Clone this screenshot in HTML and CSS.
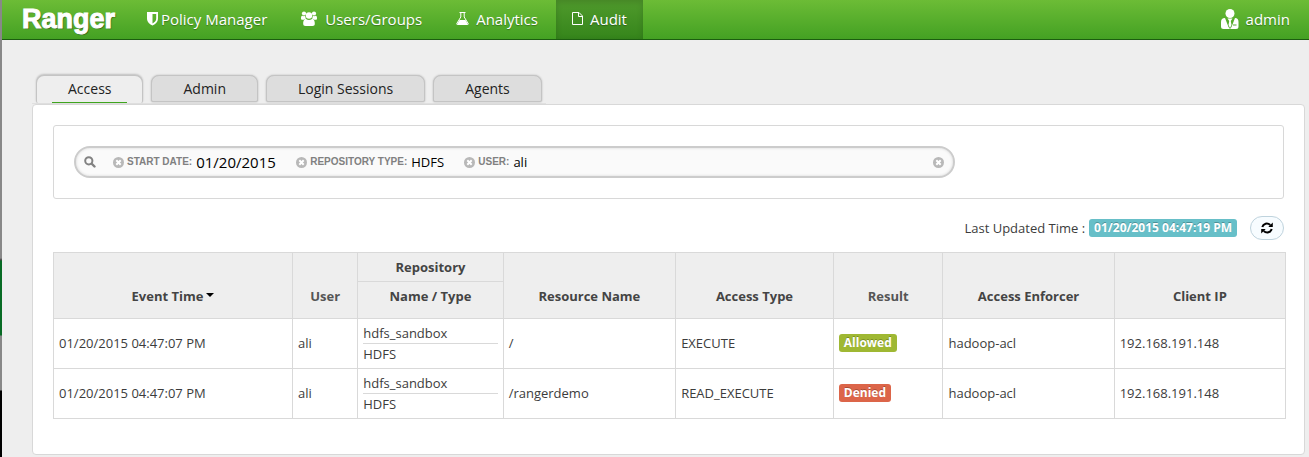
FILE: index.html
```html
<!DOCTYPE html>
<html lang="en">
<head>
<meta charset="utf-8">
<title>Ranger - Audit</title>
<link rel="stylesheet" href="styles.css">
</head>
<body>
<header class="topbar">
  <a class="brand" href="#">Ranger</a>
  <nav class="nav">
    <a class="nav-item tight" href="#">
      <svg width="11" height="14" viewBox="0 0 11 14"><path fill="#fff" fill-rule="evenodd" d="M0 0H11V6.500C11 10 8 12.400 5.500 13.500C3 12.400 0 10 0 6.500ZM5.500 2V11.500C7.500 10.400 9.200 9 9.200 6.500V2Z"/></svg>
      <span>Policy Manager</span>
    </a>
    <a class="nav-item wide" href="#">
      <svg width="16" height="15" viewBox="0 0 16 15"><g fill="#fff"><circle cx="3" cy="2.500" r="2.100"/><circle cx="13" cy="2.500" r="2.100"/><circle cx="8" cy="4.500" r="3.200"/><path d="M1.500 4.800C2.500 5.500 3.500 5.200 4.200 4.700C4.200 6 4.700 7 5.200 7.600C4.200 7.700 3.400 8.100 2.900 8.800H1.500C.4 8.800 0 8.200 0 7.200C0 5.800.4 4.600 1.500 4.800ZM14.500 4.800C13.500 5.500 12.500 5.200 11.800 4.700C11.800 6 11.300 7 10.800 7.600C11.800 7.700 12.600 8.100 13.100 8.800H14.500C15.600 8.800 16 8.200 16 7.200C16 5.800 15.600 4.600 14.500 4.800ZM5 8C6.800 9.300 9.200 9.300 11 8C13.200 8 13.800 10.500 13.800 12.700C13.800 14 13 15 11.500 15H4.500C3 15 2.200 14 2.200 12.700C2.200 10.500 2.800 8 5 8Z"/></g></svg>
      <span>Users/Groups</span>
    </a>
    <a class="nav-item" href="#">
      <svg width="13" height="13" viewBox="0 0 13 13"><path fill="none" stroke="#fff" d="M3.500.5H9.500M4.800.5V5L.8 11.500Q.5 12.500 1.500 12.500H11.500Q12.500 12.500 12.200 11.500L8.200 5V.5"/><path fill="#fff" d="M3.500 8H9.500L12 12.500H1Z"/></svg>
      <span>Analytics</span>
    </a>
    <a class="nav-item active" href="#">
      <svg width="11" height="13" viewBox="0 0 11 13"><path fill="none" stroke="#fff" d="M.5.5H7L10.500 4V12.500H.5ZM6.500.5V4.500H10.500"/></svg>
      <span>Audit</span>
    </a>
  </nav>
  <a class="account" href="#">
    <svg width="18" height="20" viewBox="0 0 18 20"><g fill="#fff"><circle cx="9" cy="4.500" r="4.500"/><path fill-rule="evenodd" d="M4 9L7.500 18L9 20H2.500Q0 20 0 17.500V13Q0 9 4 9ZM14 9L10.500 18L9 20H15Q17.500 20 17.500 17.500V13Q17.500 9 14 9ZM12 15.500V16.500H15.500V15.500Z"/><path d="M6.500 9.500H11.500L9.800 12L10.500 16L9 19L7.500 16L8.200 12Z"/></g></svg>
    <span>admin</span>
  </a>
</header>
<main class="page">
  <nav class="tabs">
    <a class="tab current" href="#"><span>Access</span></a>
    <a class="tab" href="#"><span>Admin</span></a>
    <a class="tab" href="#"><span>Login Sessions</span></a>
    <a class="tab" href="#"><span>Agents</span></a>
  </nav>
  <section class="panel">
    <div class="filter">
      <form class="search">
        <svg class="lens" width="12" height="12" viewBox="0 0 12 12"><circle cx="4.800" cy="4.800" r="3.600" fill="none" stroke="#828282" stroke-width="2"/><path stroke="#828282" stroke-width="2.400" stroke-linecap="round" d="M8 8L10.500 10.500"/></svg>
        <div class="facet">
          <button class="clear" type="button" aria-label="Remove start date"><svg width="11" height="11" viewBox="0 0 11 11"><circle cx="5.500" cy="5.500" r="5.500" fill="#b8b8b8"/><path stroke="#fff" stroke-width="2" d="M3.300 3.300L7.700 7.700M7.700 3.300L3.300 7.700"/></svg></button>
          <label for="start">START DATE:</label>
          <input class="value date" id="start" type="text" value="01/20/2015">
        </div>
        <div class="facet">
          <button class="clear" type="button" aria-label="Remove repository type"><svg width="11" height="11" viewBox="0 0 11 11"><circle cx="5.500" cy="5.500" r="5.500" fill="#b8b8b8"/><path stroke="#fff" stroke-width="2" d="M3.300 3.300L7.700 7.700M7.700 3.300L3.300 7.700"/></svg></button>
          <label for="repo">REPOSITORY TYPE:</label>
          <input class="value type" id="repo" type="text" value="HDFS">
        </div>
        <div class="facet">
          <button class="clear" type="button" aria-label="Remove user"><svg width="11" height="11" viewBox="0 0 11 11"><circle cx="5.500" cy="5.500" r="5.500" fill="#b8b8b8"/><path stroke="#fff" stroke-width="2" d="M3.300 3.300L7.700 7.700M7.700 3.300L3.300 7.700"/></svg></button>
          <label for="user">USER:</label>
          <input class="value" id="user" type="text" value="ali">
        </div>
        <button class="clear all" type="button" aria-label="Clear search"><svg width="11" height="11" viewBox="0 0 11 11"><circle cx="5.500" cy="5.500" r="5.500" fill="#b8b8b8"/><path stroke="#fff" stroke-width="2" d="M3.300 3.300L7.700 7.700M7.700 3.300L3.300 7.700"/></svg></button>
      </form>
    </div>
    <div class="status">
      <span>Last Updated Time :</span>
      <span class="label info">01/20/2015 04:47:19 PM</span>
      <button class="refresh" type="button" aria-label="Refresh"><svg width="12" height="12" viewBox="0 0 12 12"><path fill="none" stroke="#000" stroke-width="2" d="M1.300 5C2.200 1.400 6.500.4 9.300 3M10.700 7C9.800 10.600 5.500 11.600 2.700 9"/><path d="M11.800.5V5H7.300ZM.2 11.500V7H4.700Z"/></svg></button>
    </div>
    <table class="grid">
      <colgroup><col class="c-time"><col class="c-user"><col class="c-repo"><col class="c-res"><col class="c-type"><col class="c-result"><col class="c-enf"><col class="c-ip"></colgroup>
      <thead>
        <tr class="group"><th rowspan="2">Event Time<span class="caret"></span></th><th class="soft" rowspan="2">User</th><th class="over">Repository</th><th rowspan="2">Resource Name</th><th rowspan="2">Access Type</th><th class="soft" rowspan="2">Result</th><th rowspan="2">Access Enforcer</th><th rowspan="2">Client IP</th></tr>
        <tr class="names"><th>Name / Type</th></tr>
      </thead>
      <tbody>
        <tr><td>01/20/2015 04:47:07 PM</td><td>ali</td><td class="pair"><div class="repo">hdfs_sandbox</div><div>HDFS</div></td><td>/</td><td>EXECUTE</td><td><span class="label allowed">Allowed</span></td><td>hadoop-acl</td><td>192.168.191.148</td></tr>
        <tr><td>01/20/2015 04:47:07 PM</td><td>ali</td><td class="pair"><div class="repo">hdfs_sandbox</div><div>HDFS</div></td><td>/rangerdemo</td><td>READ_EXECUTE</td><td><span class="label denied">Denied</span></td><td>hadoop-acl</td><td>192.168.191.148</td></tr>
      </tbody>
    </table>
  </section>
</main>
</body>
</html>
```
FILE: styles.css
```css
* { box-sizing: border-box; }

body {
  margin: 0;
  padding-left: 2px;
  min-height: 100vh;
  background: linear-gradient(#888 0 258px, #444 260px, #086b25 261px 335px, #888 336px 390px, #000 391px) 0 0 / 2px 100% no-repeat #eee;
  font: 13px/20px "Open Sans", "Noto Sans", sans-serif;
  color: #3c3c3c;
}

a { color: inherit; text-decoration: none; }
svg { display: block; flex: none; }

.topbar {
  display: flex;
  height: 40px;
  padding: 0 19px 0 20px;
  border-bottom: 1px solid #1c5d10;
  background: linear-gradient(#6cbc36, #44a123);
  color: #fff;
  font-size: 15px;
  text-shadow: 0 1px 1px rgba(0, 0, 0, .3);
}
.brand {
  width: 109px;
  font: bold 27px/39px "Liberation Sans", Arial, sans-serif;
  -webkit-text-stroke: 1px #fff;
  text-shadow: 1px 1px 1px rgba(0, 0, 0, .5);
}
.nav { display: flex; gap: 2px; }
.nav-item, .account { display: flex; align-items: center; gap: 7px; padding-bottom: 2px; }
.nav-item { padding-left: 16px; padding-right: 16px; }
.tight { gap: 3px; }
.wide { gap: 8px; }
.active {
  background: linear-gradient(#509a2c, #35851b);
  box-shadow: inset 0 2px 6px rgba(0, 0, 0, .15);
}
.account { margin-left: auto; }

.page { padding: 35px 4px 2px 30px; }

.tabs {
  display: flex;
  align-items: flex-start;
  gap: 8px;
  width: max-content;
  padding: 0 4px;
  border-bottom: 1px solid #e0e0e0;
}
.tab {
  display: flex;
  justify-content: center;
  height: 27px;
  padding: 0 31px;
  border: 1px solid #c4c4c4;
  border-radius: 8px 8px 2px 2px;
  background: #ddd;
  box-shadow: 0 0 2px rgba(0, 0, 0, .25);
  color: #222;
  font-size: 14px;
  line-height: 26px;
}
.current {
  height: 28px;
  padding: 0 15px;
  border-bottom: 0;
  background: #eee;
  box-shadow: 0 -1px 2px rgba(0, 0, 0, .2);
}
.current span { padding: 0 16px; border-bottom: 1px solid #3fa51e; }

.panel {
  padding: 20px 18px 35px 20px;
  border: 1px solid #d8d8d8;
  border-radius: 4px;
  background: #fff;
}
.filter {
  margin-right: 2px;
  padding: 20px;
  border: 1px solid #d8d8d8;
  border-radius: 3px;
}
.search {
  display: flex;
  align-items: center;
  max-width: 881px;
  height: 32px;
  padding: 0 9px 0 8px;
  border: 2px solid #ccc;
  border-radius: 16px;
  background: #fafafa;
  box-shadow: inset 0 0 3px rgba(0, 0, 0, .15);
}
.lens { margin-right: 17px; }
.facet { display: flex; align-items: center; margin-right: 16px; }
.facet label {
  margin: 0 4px 0 3px;
  color: #808080;
  font: bold 10px/14px "Liberation Sans", Arial, sans-serif;
}
.clear { padding: 0; border: 0; background: none; }
.all { margin-left: auto; }
.value {
  width: 80px;
  padding: 0;
  border: 0;
  outline: 0;
  background: none;
  color: #000;
  font: 13px/20px "Open Sans", sans-serif;
}
.date { width: 84px; font-size: 15px; }
.type { width: 37px; }

.status {
  display: flex;
  align-items: center;
  justify-content: flex-end;
  gap: 4px;
  margin: 17px 2px 12px 0;
}
.label {
  display: inline-block;
  padding: 0 5px;
  border-radius: 3px;
  color: #fff;
  font-size: 12px;
  font-weight: bold;
  line-height: 18px;
  text-shadow: 0 -1px 0 rgba(0, 0, 0, .25);
  vertical-align: 1px;
}
.info { background: #67bfc8; }
.allowed { background: #9fb833; }
.denied { background: #dc6549; }
.refresh {
  display: grid;
  place-items: center;
  width: 34px;
  height: 24px;
  margin-left: 9px;
  padding: 0;
  border: 1px solid #bfd3dd;
  border-radius: 12px;
  background: #f7fcff;
}

.grid { width: 100%; border-collapse: collapse; table-layout: fixed; }
.grid th, .grid td { border: 1px solid #d9d9d9; }
.grid th {
  padding: 4px 5px 12px;
  background: #eee;
  color: #444;
  vertical-align: bottom;
}
.grid th.soft { color: #555; }
.grid th.over { padding: 4px 5px; }
.grid .group { height: 29px; }
.grid .names { height: 37px; }
.grid td { height: 50px; padding: 3px 5px 5px; }
.grid td.pair { padding: 4px 5px; }
.repo { border-bottom: 1px solid #d9d9d9; }
.caret {
  display: inline-block;
  margin-left: 3px;
  border: 4px solid transparent;
  border-top-color: #000;
  border-bottom: 0;
  vertical-align: 4px;
}
.c-time { width: 19.4%; }
.c-user { width: 5.3%; }
.c-repo { width: 11.8%; }
.c-res { width: 14%; }
.c-type { width: 12.8%; }
.c-result { width: 8.9%; }
.c-enf { width: 13.9%; }
.c-ip { width: 13.9%; }
```
